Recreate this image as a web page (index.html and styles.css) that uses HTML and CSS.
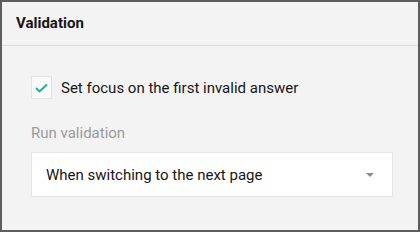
FILE: index.html
```html
<!DOCTYPE html>
<html>
<head>
<meta charset="utf-8">
<link rel="stylesheet" href="styles.css">
</head>
<body>
<div class="panel">
  <div class="panel-header">Validation</div>
  <div class="panel-body">
    <label class="check-row">
      <span class="checkbox">
        <svg width="13" height="10" viewBox="0 0 13 10"><path d="M1 5 L4.6 8.4 L12 1.4" fill="none" stroke="#19b394" stroke-width="2"/></svg>
      </span>
      <span class="check-label">Set focus on the first invalid answer</span>
    </label>
    <div class="field-title">Run validation</div>
    <div class="dropdown">
      <span class="dropdown-value">When switching to the next page</span>
      <span class="dropdown-arrow"></span>
    </div>
  </div>
</div>
</body>
</html>
```
FILE: styles.css
```css
html, body {
  margin: 0;
  padding: 0;
  background: #ffffff;
}
.panel {
  width: 420px;
  height: 232px;
  box-sizing: border-box;
  border: 2px solid #5e5e5e;
  background: #f3f3f3;
  font-family: Roboto, "Liberation Sans", sans-serif;
  color: #161616;
}
.panel-header {
  height: 44px;
  box-sizing: border-box;
  border-bottom: 1px solid #dcdcdc;
  padding: 0 0 2px 14px;
  display: flex;
  align-items: center;
  font-weight: bold;
  font-size: 15px;
}
.panel-body {
  padding: 30px 25px 0 29px;
}
.check-row {
  display: flex;
  align-items: center;
  gap: 9px;
}
.checkbox {
  width: 21px;
  height: 23px;
  box-sizing: border-box;
  background: #fafafa;
  border: 1px solid #e2e2e2;
  display: flex;
  align-items: center;
  justify-content: center;
}
.check-label {
  font-size: 15px;
}
.field-title {
  margin-top: 24px;
  font-size: 15px;
  color: #9a9a9a;
  line-height: 20px;
}
.dropdown {
  margin-top: 9px;
  height: 45px;
  box-sizing: border-box;
  background: #ffffff;
  border: 1px solid #e6e6e6;
  display: flex;
  align-items: center;
  padding: 0 18px 0 14px;
}
.dropdown-value {
  flex: 1;
  font-size: 15px;
}
.dropdown-arrow {
  width: 0;
  height: 0;
  border-left: 4px solid transparent;
  border-right: 4px solid transparent;
  border-top: 4px solid #8a8a8a;
}
```
